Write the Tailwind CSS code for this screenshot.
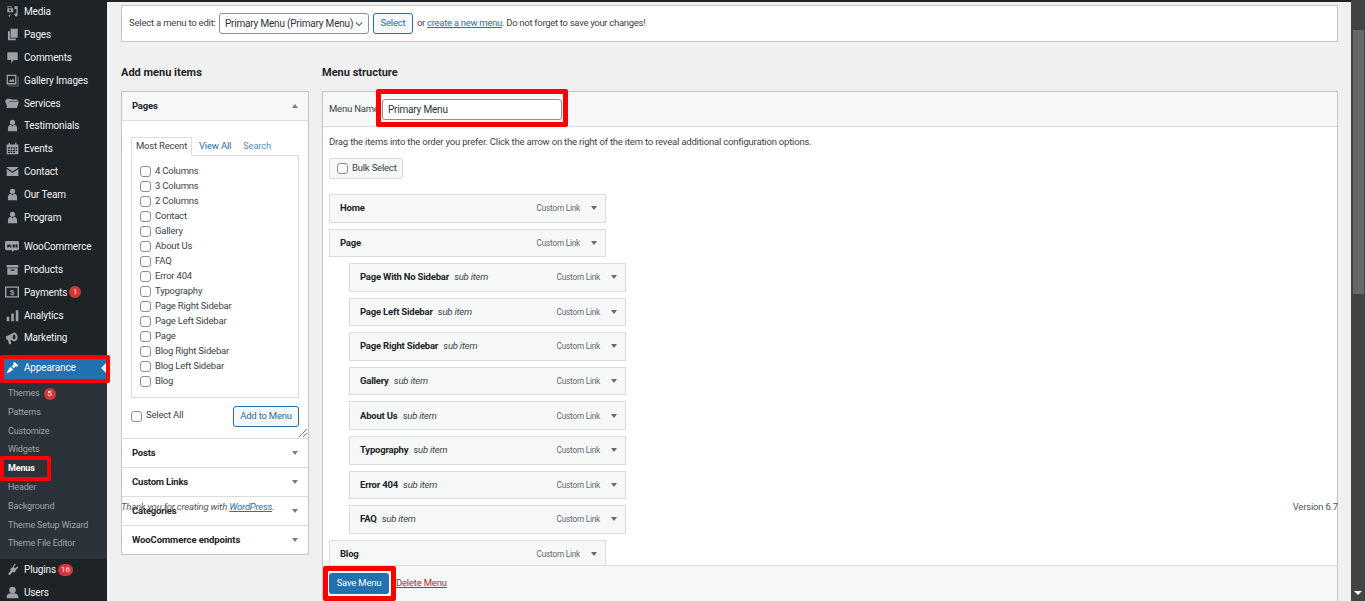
<!DOCTYPE html>
<html lang="en">
<head>
<meta charset="UTF-8">
<title>Menus</title>
<script src="https://cdn.jsdelivr.net/npm/@tailwindcss/browser@4"></script>
</head>
<body class="h-[601px] overflow-hidden bg-[#f0f0f1] font-['Roboto',sans-serif] text-[9.500px] tracking-[-0.2px] text-[#3c434a]">
<div class="relative flex h-[601px] overflow-hidden">

  <!-- admin sidebar -->
  <aside class="w-[107px] shrink-0 bg-[#1d2327] text-[10px] tracking-[-0.15px] text-[#f0f0f1]">
    <nav class="flex flex-col">
      <a class="flex h-[22.900px] items-center gap-[5px] pl-[6px]"><svg class="h-[13px] w-[13px] text-[#9ca2a7]" viewBox="0 0 20 20" fill="currentColor"><path d="M2 2h7v2H7.500L6.800 3H4L3.500 4H2zM2 5h9v6H2zM13 2h5v13a2.500 2.500 0 1 1-2-2.400V6h-3zM8 13l-3 6-1-3z"/><circle cx="6.500" cy="8" r="1.500" fill="#1d2327"/></svg><span>Media</span></a>
      <a class="flex h-[22.900px] items-center gap-[5px] pl-[6px]"><svg class="h-[13px] w-[13px] text-[#9ca2a7]" viewBox="0 0 20 20" fill="currentColor"><path d="M7 1h11v14H7zM3 5h3v11h9v3H3z"/></svg><span>Pages</span></a>
      <a class="flex h-[22.900px] items-center gap-[5px] pl-[6px]"><svg class="h-[13px] w-[13px] text-[#9ca2a7]" viewBox="0 0 20 20" fill="currentColor"><path d="M3 2h14a1 1 0 0 1 1 1v10a1 1 0 0 1-1 1h-5l-4 5v-5H3a1 1 0 0 1-1-1V3a1 1 0 0 1 1-1z"/></svg><span>Comments</span></a>
      <a class="flex h-[22.900px] items-center gap-[5px] pl-[6px]"><svg class="h-[13px] w-[13px] text-[#9ca2a7]" viewBox="0 0 20 20" fill="currentColor"><path fill-rule="evenodd" d="M1 1h15v15H1zM3 3v11h11V3z"/><path d="M4 12l3-4 2 2 2-4 2 6zM18 4h1v15H4v-1h14z"/></svg><span>Gallery Images</span></a>
      <a class="flex h-[22.900px] items-center gap-[5px] pl-[5px]"><svg class="h-[14px] w-[14px] text-[#9ca2a7]" viewBox="0 0 20 20" fill="currentColor"><path d="M0 7l3-3h4l2 1h9v2H6L3 15zM6 8h14l-3 9H2z"/></svg><span>Services</span></a>
      <a class="flex h-[22.900px] items-center gap-[5px] pl-[6px]"><svg class="h-[13px] w-[13px] text-[#9ca2a7]" viewBox="0 0 20 20" fill="currentColor"><circle cx="10" cy="5" r="4"/><path d="M3 19v-5c0-3 2-5 5-5l2 3 2-3c3 0 5 2 5 5v5z"/></svg><span>Testimonials</span></a>
      <a class="flex h-[22.900px] items-center gap-[5px] pl-[6px]"><svg class="h-[13px] w-[13px] text-[#9ca2a7]" viewBox="0 0 20 20" fill="currentColor"><path d="M1 4h3V1h2v3h8V1h2v3h3v15H1zM3 8v2h3V8zM7 8v2h3V8zM11 8v2h3V8zM15 8v2h2V8zM3 12v2h3v-2zM7 12v2h3v-2zM11 12v2h3v-2zM15 12v2h2v-2zM3 15v2h3v-2zM7 15v2h3v-2zM11 15v2h3v-2z" fill-rule="evenodd"/></svg><span>Events</span></a>
      <a class="flex h-[22.900px] items-center gap-[5px] pl-[6px]"><svg class="h-[13px] w-[13px] text-[#9ca2a7]" viewBox="0 0 20 20" fill="currentColor"><path d="M1 3h18v1l-9 6-9-6zM1 6l9 6 9-6v11H1z"/></svg><span>Contact</span></a>
      <a class="flex h-[22.900px] items-center gap-[5px] pl-[6px]"><svg class="h-[13px] w-[13px] text-[#9ca2a7]" viewBox="0 0 20 20" fill="currentColor"><circle cx="10" cy="5" r="4"/><path d="M3 19v-5c0-3 2-5 5-5l2 3 2-3c3 0 5 2 5 5v5z"/></svg><span>Our Team</span></a>
      <a class="flex h-[22.900px] items-center gap-[5px] pl-[6px]"><svg class="h-[13px] w-[13px] text-[#9ca2a7]" viewBox="0 0 20 20" fill="currentColor"><circle cx="10" cy="5" r="4"/><path d="M3 19v-5c0-3 2-5 5-5l2 3 2-3c3 0 5 2 5 5v5z"/></svg><span>Program</span></a>
      <a class="mt-[6px] flex h-[22.900px] items-center gap-[5px] pl-[5px]"><svg class="h-[14px] w-[14px] text-[#9ca2a7]" viewBox="0 0 20 20" fill="currentColor"><path fill-rule="evenodd" d="M2 3h16a2 2 0 0 1 2 2v9a2 2 0 0 1-2 2h-5l-2 3-1-3H2a2 2 0 0 1-2-2V5a2 2 0 0 1 2-2zM3 8v4h2l1-2 1 2h2V8H8v2L7 8H5l-1 2V8zM11 8v4h3V8zM15 8v4h3V8z"/></svg><span>WooCommerce</span></a>
      <a class="flex h-[22.900px] items-center gap-[5px] pl-[6px]"><svg class="h-[13px] w-[13px] text-[#9ca2a7]" viewBox="0 0 20 20" fill="currentColor"><path fill-rule="evenodd" d="M1 3h18v4H1zM2 8h16v10H2zM7 10v2h6v-2z"/></svg><span>Products</span></a>
      <a class="flex h-[22.900px] items-center gap-[5px] pl-[5px]"><svg class="h-[14px] w-[14px] text-[#9ca2a7]" viewBox="0 0 20 20" fill="currentColor"><path fill-rule="evenodd" d="M0 2h20v16H0zM2 4v12h16V4z"/><text x="10" y="14.500" font-size="11" font-weight="700" text-anchor="middle" font-family="Liberation Sans">$</text></svg><span>Payments</span><span class="-ml-[3px] flex h-[12px] w-[12px] items-center justify-center rounded-full bg-[#d63638] text-[8px] leading-none text-white">1</span></a>
      <a class="flex h-[22.900px] items-center gap-[5px] pl-[6px]"><svg class="h-[13px] w-[13px] text-[#9ca2a7]" viewBox="0 0 20 20" fill="currentColor"><path d="M1 12h4v7H1zM8 7h4v12H8zM15 2h4v17h-4z"/></svg><span>Analytics</span></a>
      <a class="flex h-[22.900px] items-center gap-[5px] pl-[5px]"><svg class="h-[14px] w-[14px] text-[#9ca2a7]" viewBox="0 0 20 20" fill="currentColor"><path fill-rule="evenodd" d="M1 8l2-1 10-5c3 0 5 4 5 7s-2 6-5 6l-4-2-1 1 1 5H6l-2-6-2-1zM13 5c-1 0-2 2-2 4s1 3 2 3 2-1 2-3-1-4-2-4z"/></svg><span>Marketing</span></a>
      <a class="relative mt-[7px] flex h-[23px] items-center gap-[5px] bg-[#2271b1] pl-[6px] text-white"><svg class="h-[13px] w-[13px]" viewBox="0 0 20 20" fill="currentColor"><path d="M13 1l6 6-2 2-2-1-3 3-3-3 3-3-1-2zM7 9l4 4-2 2-7 4-1-1 4-7z"/></svg><span>Appearance</span><span class="absolute right-0 top-[6px] h-0 w-0 border-y-[6px] border-r-[6px] border-y-transparent border-r-[#f0f0f1]"></span></a>
      <div class="flex flex-col bg-[#2c3338] pb-[5px] pt-[5px] text-[9px] text-[#c3c4c7]/80">
        <a class="flex h-[18.800px] items-center gap-[4px] pl-[8px]"><span>Themes</span><span class="flex h-[12px] w-[12px] items-center justify-center rounded-full bg-[#d63638] text-[8px] leading-none text-white">5</span></a>
        <a class="flex h-[18.800px] items-center pl-[8px]">Patterns</a>
        <a class="flex h-[18.800px] items-center pl-[8px]">Customize</a>
        <a class="flex h-[18.800px] items-center pl-[8px]">Widgets</a>
        <a class="flex h-[18.800px] items-center pl-[8px] font-bold text-white">Menus</a>
        <a class="flex h-[18.800px] items-center pl-[8px]">Header</a>
        <a class="flex h-[18.800px] items-center pl-[8px]">Background</a>
        <a class="flex h-[18.800px] items-center pl-[8px]">Theme Setup Wizard</a>
        <a class="flex h-[18.800px] items-center pl-[8px]">Theme File Editor</a>
      </div>
      <a class="flex h-[22.900px] items-center gap-[5px] pl-[6px]"><svg class="h-[13px] w-[13px] text-[#9ca2a7]" viewBox="0 0 20 20" fill="currentColor"><path d="M13 1l2 1-3 4 2 2 4-3 1 2-4 4c0 3-3 4-5 3l-4 5-3-2 4-5c-1-2 0-5 3-5z"/></svg><span>Plugins</span><span class="-ml-[3px] flex h-[12px] w-[15px] items-center justify-center rounded-full bg-[#d63638] text-[8px] leading-none text-white">16</span></a>
      <a class="flex h-[22.900px] items-center gap-[5px] pl-[6px]"><svg class="h-[13px] w-[13px] text-[#9ca2a7]" viewBox="0 0 20 20" fill="currentColor"><circle cx="10" cy="6" r="5"/><path d="M1 19v-3c0-3 3-5 6-5h6c3 0 6 2 6 5v3z"/></svg><span>Users</span></a>
    </nav>
  </aside>

  <!-- page content -->
  <main class="relative w-[1244px] shrink-0 overflow-hidden pl-[14px] pr-[13px]">
    <div class="h-[2px] -ml-[14px] -mr-[13px] bg-[#1d2327]"></div>
    <div class="mt-[3px] flex h-[37px] items-center whitespace-nowrap border border-[#c3c4c7] bg-white pl-[7px]">
      <span class="w-[85px]">Select a menu to edit:</span>
      <span class="ml-[5px] flex h-[21px] w-[150px] items-center justify-between rounded-[3px] border border-[#8c8f94] pl-[5px] pr-[5px] text-[10px] text-[#2c3338]">Primary Menu (Primary Menu)<svg class="h-[8px] w-[8px]" viewBox="0 0 10 10" fill="none" stroke="#50575e" stroke-width="1.300"><path d="M1 3l4 4 4-4"/></svg></span>
      <span class="ml-[4px] flex h-[21px] w-[40px] items-center justify-center rounded-[3px] border border-[#2271b1] bg-[#f6f7f7] text-[#2271b1]">Select</span>
      <span class="ml-[4px] tracking-[-0.3px]">or <u class="text-[#2271b1]">create a new menu</u>. Do not forget to save your changes!</span>
    </div>

    <div class="mt-[25px] flex gap-[13px]">
      <!-- add menu items -->
      <section class="w-[188px] shrink-0">
        <h2 class="h-[24px] text-[11px] font-bold leading-[12px] tracking-normal text-[#1d2327]">Add menu items</h2>
        <div class="border border-[#c3c4c7] bg-white">
          <div class="flex h-[29px] items-center justify-between border-b border-[#dcdcde] bg-[#f6f7f7] pl-[10px] pr-[10px] font-bold text-[#1d2327]">Pages<span class="h-0 w-0 border-x-[3.500px] border-b-[4px] border-x-transparent border-b-[#787c82]"></span></div>
          <div class="relative h-[317px] pl-[9px] pr-[9px] pt-[16px]">
            <div class="flex h-[18px] items-end">
              <span class="relative z-10 -mb-px flex h-[19px] w-[61px] items-center justify-center border border-b-white border-[#dcdcde] bg-white">Most Recent</span>
              <span class="ml-[7px] flex h-[18px] items-center text-[#2271b1]">View All</span>
              <span class="ml-[12px] flex h-[18px] items-center text-[#2271b1]/80">Search</span>
            </div>
            <div class="flex h-[243px] flex-col border border-[#dcdcde] pl-[8px] pt-[8px]">
              <label class="flex h-[15px] items-center gap-[4px]"><span class="h-[11px] w-[11px] rounded-[3px] border border-[#8c8f94]"></span>4 Columns</label>
              <label class="flex h-[15px] items-center gap-[4px]"><span class="h-[11px] w-[11px] rounded-[3px] border border-[#8c8f94]"></span>3 Columns</label>
              <label class="flex h-[15px] items-center gap-[4px]"><span class="h-[11px] w-[11px] rounded-[3px] border border-[#8c8f94]"></span>2 Columns</label>
              <label class="flex h-[15px] items-center gap-[4px]"><span class="h-[11px] w-[11px] rounded-[3px] border border-[#8c8f94]"></span>Contact</label>
              <label class="flex h-[15px] items-center gap-[4px]"><span class="h-[11px] w-[11px] rounded-[3px] border border-[#8c8f94]"></span>Gallery</label>
              <label class="flex h-[15px] items-center gap-[4px]"><span class="h-[11px] w-[11px] rounded-[3px] border border-[#8c8f94]"></span>About Us</label>
              <label class="flex h-[15px] items-center gap-[4px]"><span class="h-[11px] w-[11px] rounded-[3px] border border-[#8c8f94]"></span>FAQ</label>
              <label class="flex h-[15px] items-center gap-[4px]"><span class="h-[11px] w-[11px] rounded-[3px] border border-[#8c8f94]"></span>Error 404</label>
              <label class="flex h-[15px] items-center gap-[4px]"><span class="h-[11px] w-[11px] rounded-[3px] border border-[#8c8f94]"></span>Typography</label>
              <label class="flex h-[15px] items-center gap-[4px]"><span class="h-[11px] w-[11px] rounded-[3px] border border-[#8c8f94]"></span>Page Right Sidebar</label>
              <label class="flex h-[15px] items-center gap-[4px]"><span class="h-[11px] w-[11px] rounded-[3px] border border-[#8c8f94]"></span>Page Left Sidebar</label>
              <label class="flex h-[15px] items-center gap-[4px]"><span class="h-[11px] w-[11px] rounded-[3px] border border-[#8c8f94]"></span>Page</label>
              <label class="flex h-[15px] items-center gap-[4px]"><span class="h-[11px] w-[11px] rounded-[3px] border border-[#8c8f94]"></span>Blog Right Sidebar</label>
              <label class="flex h-[15px] items-center gap-[4px]"><span class="h-[11px] w-[11px] rounded-[3px] border border-[#8c8f94]"></span>Blog Left Sidebar</label>
              <label class="flex h-[15px] items-center gap-[4px]"><span class="h-[11px] w-[11px] rounded-[3px] border border-[#8c8f94]"></span>Blog</label>
            </div>
            <div class="mt-[8px] flex items-start justify-between">
              <label class="mt-[2px] flex items-start gap-[4px]"><span class="mt-[3px] h-[11px] w-[11px] rounded-[3px] border border-[#8c8f94]"></span>Select All</label>
              <span class="flex h-[21px] w-[66px] items-center justify-center rounded-[3px] border border-[#2271b1] bg-[#f6f7f7] text-[#2271b1]">Add to Menu</span>
            </div>
            <svg class="absolute bottom-[1px] right-[1px] h-[8px] w-[8px]" viewBox="0 0 8 8" stroke="#50575e" stroke-width="0.800"><path d="M0 8l8-8M4 8l4-4"/></svg>
          </div>
          <div class="flex h-[29px] items-center justify-between border-t border-[#dcdcde] pl-[10px] pr-[10px] font-bold text-[#1d2327]">Posts<span class="h-0 w-0 border-x-[3.500px] border-t-[4px] border-x-transparent border-t-[#787c82]"></span></div>
          <div class="flex h-[29px] items-center justify-between border-t border-[#dcdcde] pl-[10px] pr-[10px] font-bold text-[#1d2327]">Custom Links<span class="h-0 w-0 border-x-[3.500px] border-t-[4px] border-x-transparent border-t-[#787c82]"></span></div>
          <div class="flex h-[29px] items-center justify-between border-t border-[#dcdcde] pl-[10px] pr-[10px] font-bold text-[#1d2327]">Categories<span class="h-0 w-0 border-x-[3.500px] border-t-[4px] border-x-transparent border-t-[#787c82]"></span></div>
          <div class="flex h-[29px] items-center justify-between border-t border-[#dcdcde] pl-[10px] pr-[10px] font-bold tracking-[-0.1px] text-[#1d2327]">WooCommerce endpoints<span class="h-0 w-0 border-x-[3.500px] border-t-[4px] border-x-transparent border-t-[#787c82]"></span></div>
        </div>
      </section>

      <!-- menu structure -->
      <section class="min-w-0 flex-1">
        <h2 class="h-[24px] text-[11px] font-bold leading-[12px] tracking-normal text-[#1d2327]">Menu structure</h2>
        <div class="border border-[#c3c4c7] bg-white">
          <div class="flex h-[35px] items-center border-b border-[#dcdcde] bg-[#f6f7f7] pl-[6px]">
            <span class="w-[53px] whitespace-nowrap">Menu Name</span>
            <span class="flex h-[21px] w-[180px] items-center rounded-[3px] border border-[#8c8f94] bg-white pl-[5px] text-[10px] text-[#2c3338]">Primary Menu</span>
          </div>
          <div class="pl-[6px] pr-[6px]">
            <p class="mt-[8px] leading-[13px]">Drag the items into the order you prefer. Click the arrow on the right of the item to reveal additional configuration options.</p>
            <div class="mt-[10px] flex h-[21px] w-[74px] items-center gap-[4px] rounded-[2px] border border-[#dcdcde] bg-[#f6f7f7] pl-[7px]"><span class="h-[11px] w-[11px] rounded-[3px] border border-[#8c8f94] bg-white"></span>Bulk Select</div>
            <ul class="mt-[15px] flex h-[400px] flex-col">
              <li class="mb-[6px] flex h-[29px] w-[277px] shrink-0 items-center justify-between border border-[#dcdcde] bg-[#f6f7f7] pl-[10px] pr-[8px]"><b class="text-[#1d2327]">Home</b><span class="flex items-center gap-[11px] text-[8.200px] text-[#646970]">Custom Link<span class="h-0 w-0 border-x-[3px] border-t-[4px] border-x-transparent border-t-[#646970]"></span></span></li>
              <li class="mb-[6px] flex h-[28px] w-[277px] shrink-0 items-center justify-between border border-[#dcdcde] bg-[#f6f7f7] pl-[10px] pr-[8px]"><b class="text-[#1d2327]">Page</b><span class="flex items-center gap-[11px] text-[8.200px] text-[#646970]">Custom Link<span class="h-0 w-0 border-x-[3px] border-t-[4px] border-x-transparent border-t-[#646970]"></span></span></li>
              <li class="mb-[6px] ml-[20px] flex h-[28.600px] w-[277px] shrink-0 items-center justify-between border border-[#dcdcde] bg-[#f6f7f7] pl-[10px] pr-[8px]"><span><b class="text-[#1d2327]">Page With No Sidebar</b> <i class="ml-[3px]">sub item</i></span><span class="flex items-center gap-[11px] text-[8.200px] text-[#646970]">Custom Link<span class="h-0 w-0 border-x-[3px] border-t-[4px] border-x-transparent border-t-[#646970]"></span></span></li>
              <li class="mb-[6px] ml-[20px] flex h-[28.600px] w-[277px] shrink-0 items-center justify-between border border-[#dcdcde] bg-[#f6f7f7] pl-[10px] pr-[8px]"><span><b class="text-[#1d2327]">Page Left Sidebar</b> <i class="ml-[3px]">sub item</i></span><span class="flex items-center gap-[11px] text-[8.200px] text-[#646970]">Custom Link<span class="h-0 w-0 border-x-[3px] border-t-[4px] border-x-transparent border-t-[#646970]"></span></span></li>
              <li class="mb-[6px] ml-[20px] flex h-[28.600px] w-[277px] shrink-0 items-center justify-between border border-[#dcdcde] bg-[#f6f7f7] pl-[10px] pr-[8px]"><span><b class="text-[#1d2327]">Page Right Sidebar</b> <i class="ml-[3px]">sub item</i></span><span class="flex items-center gap-[11px] text-[8.200px] text-[#646970]">Custom Link<span class="h-0 w-0 border-x-[3px] border-t-[4px] border-x-transparent border-t-[#646970]"></span></span></li>
              <li class="mb-[6px] ml-[20px] flex h-[28.600px] w-[277px] shrink-0 items-center justify-between border border-[#dcdcde] bg-[#f6f7f7] pl-[10px] pr-[8px]"><span><b class="text-[#1d2327]">Gallery</b> <i class="ml-[3px]">sub item</i></span><span class="flex items-center gap-[11px] text-[8.200px] text-[#646970]">Custom Link<span class="h-0 w-0 border-x-[3px] border-t-[4px] border-x-transparent border-t-[#646970]"></span></span></li>
              <li class="mb-[6px] ml-[20px] flex h-[28.600px] w-[277px] shrink-0 items-center justify-between border border-[#dcdcde] bg-[#f6f7f7] pl-[10px] pr-[8px]"><span><b class="text-[#1d2327]">About Us</b> <i class="ml-[3px]">sub item</i></span><span class="flex items-center gap-[11px] text-[8.200px] text-[#646970]">Custom Link<span class="h-0 w-0 border-x-[3px] border-t-[4px] border-x-transparent border-t-[#646970]"></span></span></li>
              <li class="mb-[6px] ml-[20px] flex h-[28.600px] w-[277px] shrink-0 items-center justify-between border border-[#dcdcde] bg-[#f6f7f7] pl-[10px] pr-[8px]"><span><b class="text-[#1d2327]">Typography</b> <i class="ml-[3px]">sub item</i></span><span class="flex items-center gap-[11px] text-[8.200px] text-[#646970]">Custom Link<span class="h-0 w-0 border-x-[3px] border-t-[4px] border-x-transparent border-t-[#646970]"></span></span></li>
              <li class="mb-[6px] ml-[20px] flex h-[28.600px] w-[277px] shrink-0 items-center justify-between border border-[#dcdcde] bg-[#f6f7f7] pl-[10px] pr-[8px]"><span><b class="text-[#1d2327]">Error 404</b> <i class="ml-[3px]">sub item</i></span><span class="flex items-center gap-[11px] text-[8.200px] text-[#646970]">Custom Link<span class="h-0 w-0 border-x-[3px] border-t-[4px] border-x-transparent border-t-[#646970]"></span></span></li>
              <li class="mb-[6px] ml-[20px] flex h-[28.600px] w-[277px] shrink-0 items-center justify-between border border-[#dcdcde] bg-[#f6f7f7] pl-[10px] pr-[8px]"><span><b class="text-[#1d2327]">FAQ</b> <i class="ml-[3px]">sub item</i></span><span class="flex items-center gap-[11px] text-[8.200px] text-[#646970]">Custom Link<span class="h-0 w-0 border-x-[3px] border-t-[4px] border-x-transparent border-t-[#646970]"></span></span></li>
              <li class="flex h-[29px] w-[277px] shrink-0 items-center justify-between border border-[#dcdcde] bg-[#f6f7f7] pl-[10px] pr-[8px]"><b class="text-[#1d2327]">Blog</b><span class="flex items-center gap-[11px] text-[8.200px] text-[#646970]">Custom Link<span class="h-0 w-0 border-x-[3px] border-t-[4px] border-x-transparent border-t-[#646970]"></span></span></li>
            </ul>
          </div>
        </div>
      </section>
    </div>

    <!-- sticky save bar -->
    <div class="absolute bottom-0 left-[215px] flex h-[36px] w-[1016px] items-center border-x border-t border-x-[#c3c4c7] border-t-[#dcdcde] bg-[#f6f7f7] pl-[6px]">
      <span class="flex h-[21px] w-[60px] items-center justify-center rounded-[3px] bg-[#2271b1] text-white">Save Menu</span>
      <u class="ml-[7px] text-[#b32d2e]">Delete Menu</u>
    </div>

    <!-- footer, overlapping as in the page -->
    <div class="absolute left-[14px] right-[13px] top-[500px] flex justify-between leading-[13px] text-[#50575e]">
      <i>Thank you for creating with <u class="text-[#2271b1]">WordPress</u>.</i>
      <span>Version 6.7</span>
    </div>
  </main>

  <!-- scrollbar -->
  <div class="relative flex-1 bg-[#434343]">
    <div class="absolute left-[2px] top-[30px] h-[264px] w-[11px] bg-[#686868]"></div>
    <div class="absolute bottom-[6px] left-[3px] h-0 w-0 border-x-[4px] border-t-[4px] border-x-transparent border-t-white"></div>
  </div>

  <!-- red annotation boxes -->
  <div class="absolute left-0 top-[355px] h-[28px] w-[110px] rounded-[2px] border-[4px] border-[#f00]"></div>
  <div class="absolute left-0 top-[456px] h-[25px] w-[51px] rounded-[2px] border-[4px] border-[#f00]"></div>
  <div class="absolute left-[376px] top-[89px] h-[38px] w-[192px] rounded-[2px] border-[5px] border-[#f00]"></div>
  <div class="absolute left-[323px] top-[566px] h-[35px] w-[73px] rounded-[2px] border-[5px] border-[#f00]"></div>
</div>
</body>
</html>
